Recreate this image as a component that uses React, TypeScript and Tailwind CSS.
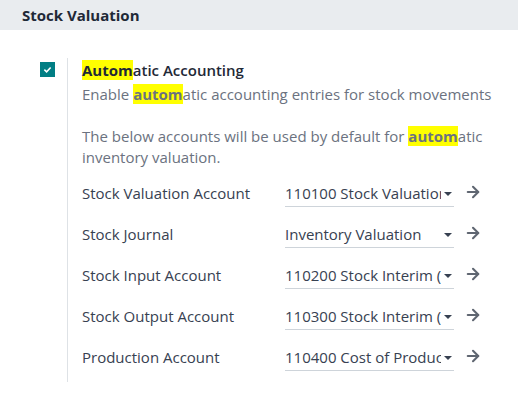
import { ArrowRight } from "lucide-react";

const rows = [
  { label: "Stock Valuation Account", value: "110100 Stock Valuation" },
  { label: "Stock Journal", value: "Inventory Valuation" },
  { label: "Stock Input Account", value: "110200 Stock Interim (Received)" },
  { label: "Stock Output Account", value: "110300 Stock Interim (Delivered)" },
  { label: "Production Account", value: "110400 Cost of Production" },
];

function Hl({ children }: { children: React.ReactNode }) {
  return <span className="bg-[#ffff00] font-bold">{children}</span>;
}

export default function App() {
  return (
    <div className="w-[518px] h-[402px] bg-white text-[#374151] font-['Open_Sans',sans-serif]">
      <div className="h-[30px] bg-[#e9ecef] pl-[22px] flex items-center">
        <h2 className="text-[15px] font-bold text-[#1f2937]">Stock Valuation</h2>
      </div>

      <div className="flex pt-[28px] pl-[40px]">
        <div className="w-[27px] pt-[4px]">
          <div className="w-[15px] h-[15px] bg-[#017e84] flex items-center justify-center">
            <svg width="9" height="9" viewBox="0 0 10 10" fill="none">
              <path d="M1.5 5.2 L4 7.5 L8.5 2.8" stroke="white" strokeWidth="1.8" />
            </svg>
          </div>
        </div>
        <div className="border-l border-[#dee2e6] pl-[14px] w-[440px]">
          <div className="text-[15px] font-semibold leading-[24px] text-[#1f2937]">
            <Hl>Autom</Hl>atic Accounting
          </div>
          <div className="text-[15px] leading-[25px] text-[#6b7280]">
            Enable <Hl>autom</Hl>atic accounting entries for stock movements
          </div>

          <p className="text-[15px] leading-[21px] text-[#6b7280] mt-[19px]">
            The below accounts will be used by default for <Hl>autom</Hl>atic inventory valuation.
          </p>

          <div className="mt-[9px] flex flex-col">
            {rows.map((r) => (
              <div key={r.label} className="h-[41px] flex items-start pt-[4px]">
                <div className="w-[203px] text-[15px] leading-[24px] text-[#374151]">{r.label}</div>
                <div className="w-[169px] h-[26px] border-b border-[#ced4da] flex items-center">
                  <span className="flex-1 overflow-hidden whitespace-nowrap text-[15px] text-[#374151]">
                    {r.value}
                  </span>
                  <svg width="10" height="6" viewBox="0 0 10 6" className="ml-[2px] mr-[1px] shrink-0">
                    <path d="M1 1 L5 5 L9 1 Z" fill="#374151" />
                  </svg>
                </div>
                <ArrowRight size={18} strokeWidth={2.75} className="ml-[10px] mt-[2px] text-[#5f6671]" />
              </div>
            ))}
          </div>
        </div>
      </div>
    </div>
  );
}
